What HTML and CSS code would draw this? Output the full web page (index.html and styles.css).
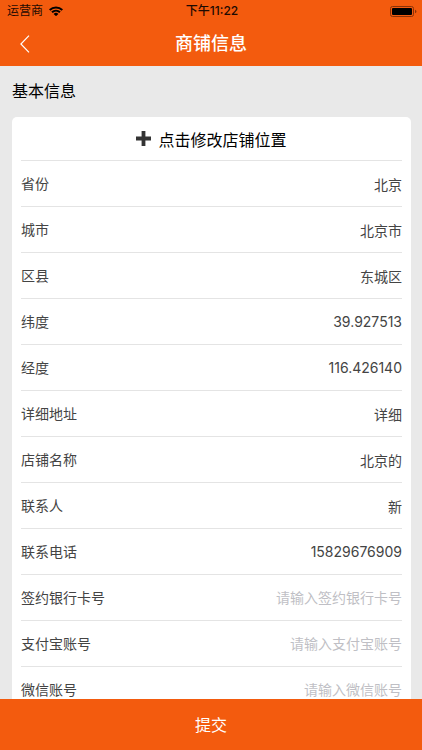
FILE: index.html
```html
<!DOCTYPE html>
<html lang="zh-CN">
<head>
<meta charset="utf-8">
<meta name="viewport" content="width=device-width, initial-scale=1">
<title>商铺信息</title>
<link rel="stylesheet" href="styles.css">
</head>
<body>
<header class="top">
  <div class="status">
    <div class="carrier">
      <span>运营商</span>
      <svg class="wifi" viewBox="0 0 14 10" aria-hidden="true">
        <path d="M0 3.2a10.3 10.3 0 0 1 14 0L12.6 4.7a8.2 8.2 0 0 0-11.2 0Z"/>
        <path d="M2.3 5.6a6.9 6.9 0 0 1 9.4 0L10.3 7a4.9 4.9 0 0 0-6.6 0Z"/>
        <path d="M4.6 7.9a3.5 3.5 0 0 1 4.8 0L7 10.2Z"/>
      </svg>
    </div>
    <span class="time">下午11:22</span>
    <svg class="battery" viewBox="0 0 27 11" aria-hidden="true">
      <rect class="battery-frame" x=".5" y=".5" width="23" height="10" rx="2"/>
      <rect x="2" y="2" width="20" height="7" rx="1"/>
      <path class="battery-tip" d="M25 3.7c2 .6 2 3 0 3.6Z"/>
    </svg>
  </div>
  <nav class="bar">
    <button class="back" type="button" aria-label="返回">
      <svg viewBox="0 0 10 18" aria-hidden="true"><path d="M9 .7.9 9 9 17.3"/></svg>
    </button>
    <h1 class="title">商铺信息</h1>
  </nav>
</header>
<main class="content">
  <h2 class="section">基本信息</h2>
  <form class="card" id="shop">
    <button class="locate" type="button">
      <svg class="plus" viewBox="0 0 15 15" aria-hidden="true"><path d="M5.6 0h3.8v5.6H15v3.8H9.4V15H5.6V9.4H0V5.6h5.6Z"/></svg>
      <span>点击修改店铺位置</span>
    </button>
    <div class="row"><label for="province">省份</label><input id="province" type="text" value="北京"></div>
    <div class="row"><label for="city">城市</label><input id="city" type="text" value="北京市"></div>
    <div class="row"><label for="district">区县</label><input id="district" type="text" value="东城区"></div>
    <div class="row"><label for="lat">纬度</label><input id="lat" type="text" value="39.927513"></div>
    <div class="row"><label for="lng">经度</label><input id="lng" type="text" value="116.426140"></div>
    <div class="row"><label for="address">详细地址</label><input id="address" type="text" value="详细"></div>
    <div class="row"><label for="name">店铺名称</label><input id="name" type="text" value="北京的"></div>
    <div class="row"><label for="contact">联系人</label><input id="contact" type="text" value="新"></div>
    <div class="row"><label for="phone">联系电话</label><input id="phone" type="tel" value="15829676909"></div>
    <div class="row"><label for="bank">签约银行卡号</label><input id="bank" type="text" placeholder="请输入签约银行卡号"></div>
    <div class="row"><label for="alipay">支付宝账号</label><input id="alipay" type="text" placeholder="请输入支付宝账号"></div>
    <div class="row"><label for="wechat">微信账号</label><input id="wechat" type="text" placeholder="请输入微信账号"></div>
  </form>
</main>
<button class="submit" type="submit" form="shop">提交</button>
</body>
</html>
```
FILE: styles.css
```css
* {
  box-sizing: border-box;
}

body {
  margin: 0;
  height: 100vh;
  display: flex;
  flex-direction: column;
  background: #e9e9e9;
  color: #000;
  font-family: Inter, "Noto Sans CJK SC", sans-serif;
}

button,
input {
  font: inherit;
  color: inherit;
  border: 0;
  border-radius: 0;
  padding: 0;
  background: none;
}

.top {
  flex: none;
  background: #f35b0e;
}

.status {
  height: 22px;
  padding: 0 5px 0 7px;
  display: grid;
  grid-template-columns: 1fr auto 1fr;
  align-items: center;
  color: #1c0a02;
  font-size: 12px;
  line-height: 22px;
}

.carrier {
  display: flex;
  align-items: center;
  gap: 6px;
}

.wifi {
  width: 14px;
  height: 10px;
}

.time {
  font-weight: 500;
}

.battery {
  width: 27px;
  height: 11px;
  justify-self: end;
}

.battery-frame {
  fill: none;
  stroke: #8a3208;
}

.battery-tip {
  fill: #8a3208;
}

.bar {
  height: 44px;
  padding: 0 15px 1px;
  display: grid;
  grid-template-columns: 1fr auto 1fr;
  align-items: center;
}

.back {
  width: 20px;
  height: 42px;
  display: flex;
  align-items: center;
  justify-content: center;
}

.back svg {
  width: 10px;
  height: 18px;
  fill: none;
  stroke: #fff;
  stroke-width: 1.2;
}

.title {
  margin: 0;
  color: #fff;
  font-size: 18px;
  font-weight: 500;
  line-height: 42px;
}

.content {
  flex: 1;
  min-height: 0;
  overflow: hidden;
  padding: 0 11px 0 12px;
}

.section {
  margin: 0;
  font-size: 16px;
  font-weight: 400;
  line-height: 51px;
}

.card {
  padding: 0 9px;
  border-radius: 5px;
  background: #fff;
}

.locate {
  width: 100%;
  height: 44px;
  display: flex;
  align-items: center;
  justify-content: center;
  gap: 7px;
  border-bottom: 1px solid #e4e4e4;
  font-size: 16px;
}

.plus {
  width: 15px;
  height: 15px;
  fill: #333;
}

.row {
  height: 46px;
  display: flex;
  align-items: center;
  gap: 12px;
  border-bottom: 1px solid #e4e4e4;
  color: #444;
  font-size: 14px;
}

.row label {
  flex: none;
  line-height: 21px;
}

.row input {
  flex: 1;
  min-width: 0;
  height: 45px;
  text-align: right;
}

.row input::placeholder {
  color: #bfbfc5;
  opacity: 1;
}

.submit {
  flex: none;
  height: 51px;
  padding-bottom: 1px;
  background: #f35b0e;
  color: #fff;
  font-size: 16px;
}
```
